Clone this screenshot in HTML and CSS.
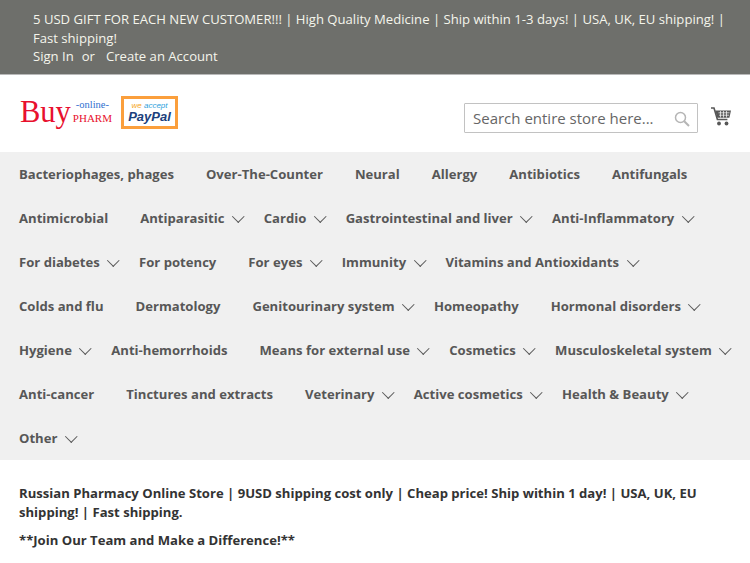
FILE: index.html
```html
<!DOCTYPE html>
<html lang="en">
<head>
  <meta charset="UTF-8">
  <meta name="viewport" content="width=device-width, initial-scale=1.0">
  <title>Buy Online Pharm</title>
  <link rel="stylesheet" href="styles.css">
</head>
<body>
  <div class="topbar">
    <p class="promo">5 USD GIFT FOR EACH NEW CUSTOMER!!! | High Quality Medicine | Ship within 1-3 days! | USA, UK, EU shipping! | Fast shipping!</p>
    <div class="account">
      <a href="#">Sign In</a>
      <span class="or">or</span>
      <a href="#">Create an Account</a>
    </div>
  </div>

  <header class="header">
    <div class="brand">
      <a class="logo" href="#">
        <span class="logo-buy">Buy</span>
        <span class="logo-side">
          <span class="logo-online">-online-</span>
          <span class="logo-pharm">PHARM</span>
        </span>
      </a>
      <div class="paypal">
        <span class="paypal-top"><span class="paypal-we">we</span> accept</span>
        <span class="paypal-name">PayPal</span>
      </div>
    </div>
    <div class="tools">
      <div class="search">
        <span class="search-text">Search entire store here...</span>
        <svg class="search-icon" width="16" height="16" viewBox="0 0 16 16" fill="none" stroke="#b5b5b5" stroke-width="1.5">
          <circle cx="6.5" cy="6.5" r="5"/>
          <path d="M10.2 10.2 15 15" stroke-width="2"/>
        </svg>
      </div>
      <svg class="cart" width="20" height="19" viewBox="0 0 20 19">
        <path d="M0 1h3l3.4 11.5h10" fill="none" stroke="#575757" stroke-width="1.6"/>
        <path d="M4.2 3.5H20l-1.6 7.3H6.3z" fill="#575757"/>
        <path d="M7.5 5.8h11M8 8.2h10M9.5 4v6.5M12.5 4v6.5M15.5 4v6.5" stroke="#fff" stroke-width=".7"/>
        <circle cx="8" cy="16.5" r="1.9" fill="#575757"/>
        <circle cx="15.5" cy="16.5" r="1.9" fill="#575757"/>
      </svg>
    </div>
  </header>

  <nav class="nav">
    <div class="nav-list">
      <a class="nav-item" href="#">Bacteriophages, phages</a>
      <a class="nav-item" href="#">Over-The-Counter</a>
      <a class="nav-item" href="#">Neural</a>
      <a class="nav-item" href="#">Allergy</a>
      <a class="nav-item" href="#">Antibiotics</a>
      <a class="nav-item" href="#">Antifungals</a>
      <a class="nav-item" href="#">Antimicrobial</a>
      <a class="nav-item has-sub" href="#">Antiparasitic</a>
      <a class="nav-item has-sub" href="#">Cardio</a>
      <a class="nav-item has-sub" href="#">Gastrointestinal and liver</a>
      <a class="nav-item has-sub" href="#">Anti-Inflammatory</a>
      <a class="nav-item has-sub" href="#">For diabetes</a>
      <a class="nav-item" href="#">For potency</a>
      <a class="nav-item has-sub" href="#">For eyes</a>
      <a class="nav-item has-sub" href="#">Immunity</a>
      <a class="nav-item has-sub" href="#">Vitamins and Antioxidants</a>
      <a class="nav-item" href="#">Colds and flu</a>
      <a class="nav-item" href="#">Dermatology</a>
      <a class="nav-item has-sub" href="#">Genitourinary system</a>
      <a class="nav-item" href="#">Homeopathy</a>
      <a class="nav-item has-sub" href="#">Hormonal disorders</a>
      <a class="nav-item has-sub" href="#">Hygiene</a>
      <a class="nav-item" href="#">Anti-hemorrhoids</a>
      <a class="nav-item has-sub" href="#">Means for external use</a>
      <a class="nav-item has-sub" href="#">Cosmetics</a>
      <a class="nav-item has-sub" href="#">Musculoskeletal system</a>
      <a class="nav-item" href="#">Anti-cancer</a>
      <a class="nav-item" href="#">Tinctures and extracts</a>
      <a class="nav-item has-sub" href="#">Veterinary</a>
      <a class="nav-item has-sub" href="#">Active cosmetics</a>
      <a class="nav-item has-sub" href="#">Health &amp; Beauty</a>
      <a class="nav-item has-sub" href="#">Other</a>
    </div>
  </nav>

  <main class="content">
    <p>Russian Pharmacy Online Store | 9USD shipping cost only | Cheap price! Ship within 1 day! | USA, UK, EU shipping! | Fast shipping.</p>
    <p>**Join Our Team and Make a Difference!**</p>
  </main>
</body>
</html>
```

FILE: styles.css
```css
* {
  box-sizing: border-box;
}

html, body {
  height: 563px;
  overflow: hidden;
}

body {
  margin: 0;
  background: #fff;
  color: #333;
  font-family: "Open Sans", Arial, sans-serif;
  font-size: 13.1px;
}

a {
  color: inherit;
  text-decoration: none;
}

.topbar {
  height: 75px;
  padding: 10px 20px 0 33px;
  background: #6e6f6b;
  border-bottom: 1px solid #b9b9b9;
  color: #f5f5ec;
  line-height: 18.5px;
}

.promo {
  margin: 0;
}

.account {
  display: flex;
}

.or {
  margin: 0 11px 0 8px;
}

.header {
  display: flex;
  justify-content: space-between;
  height: 77px;
  padding: 21px 20px 0 20px;
}

.brand {
  display: flex;
  align-items: flex-start;
  gap: 9px;
}

.logo {
  display: flex;
  align-items: flex-start;
  width: 92px;
  padding-top: 1px;
  font-family: "Liberation Serif", serif;
}

.logo-buy {
  color: #e8102e;
  font-size: 30.5px;
  line-height: 30px;
}

.logo-side {
  display: flex;
  flex-direction: column;
  align-items: center;
  margin: 2px 0 0 2px;
  line-height: 12.5px;
}

.logo-online {
  color: #2f6fd0;
  font-size: 10.5px;
}

.logo-pharm {
  color: #e8102e;
  font-size: 11px;
}

.paypal {
  display: flex;
  flex-direction: column;
  align-items: center;
  width: 57px;
  height: 33px;
  border: 3px solid #fb9f3c;
  font-family: "Liberation Sans", Arial, sans-serif;
  font-style: italic;
}

.paypal-top {
  margin-top: 2px;
  color: #2c9fdc;
  font-size: 8px;
  line-height: 9px;
}

.paypal-we {
  color: #f5a623;
}

.paypal-name {
  color: #1c3f7c;
  font-size: 13px;
  font-weight: 700;
  line-height: 13px;
}

.tools {
  display: flex;
  align-items: flex-start;
  gap: 13px;
  margin-right: -1px;
  padding-top: 7px;
}

.search {
  display: flex;
  align-items: center;
  justify-content: space-between;
  width: 234px;
  height: 30px;
  padding: 0 7px 0 8px;
  border: 1px solid #c2c2c2;
  border-radius: 1px;
}

.search-text {
  color: #666;
  font-size: 15px;
}

.search-icon {
  margin-top: 1px;
}

.cart {
  margin-top: 4px;
}

.nav {
  height: 308px;
  overflow: hidden;
  padding-left: 19px;
  background: #f0f0f0;
}

/* last item on a row may run its margin past the edge */
.nav-list {
  display: flex;
  flex-wrap: wrap;
  margin-right: -20px;
}

.nav-item {
  display: flex;
  align-items: center;
  height: 44px;
  margin-right: 32px;
  color: #575757;
  font-weight: 700;
}

.nav-item.has-sub {
  margin-right: 20px;
}

.has-sub::after {
  content: "";
  width: 7.5px;
  height: 7.5px;
  margin: -3px 1.3px 0 9.5px;
  border-right: 1.3px solid #575757;
  border-bottom: 1.3px solid #575757;
  transform: rotate(45deg);
}

.content {
  padding: 24px 19px 0;
  font-weight: 700;
  line-height: 19px;
}

.content p {
  margin: 0 0 9px;
}
```
